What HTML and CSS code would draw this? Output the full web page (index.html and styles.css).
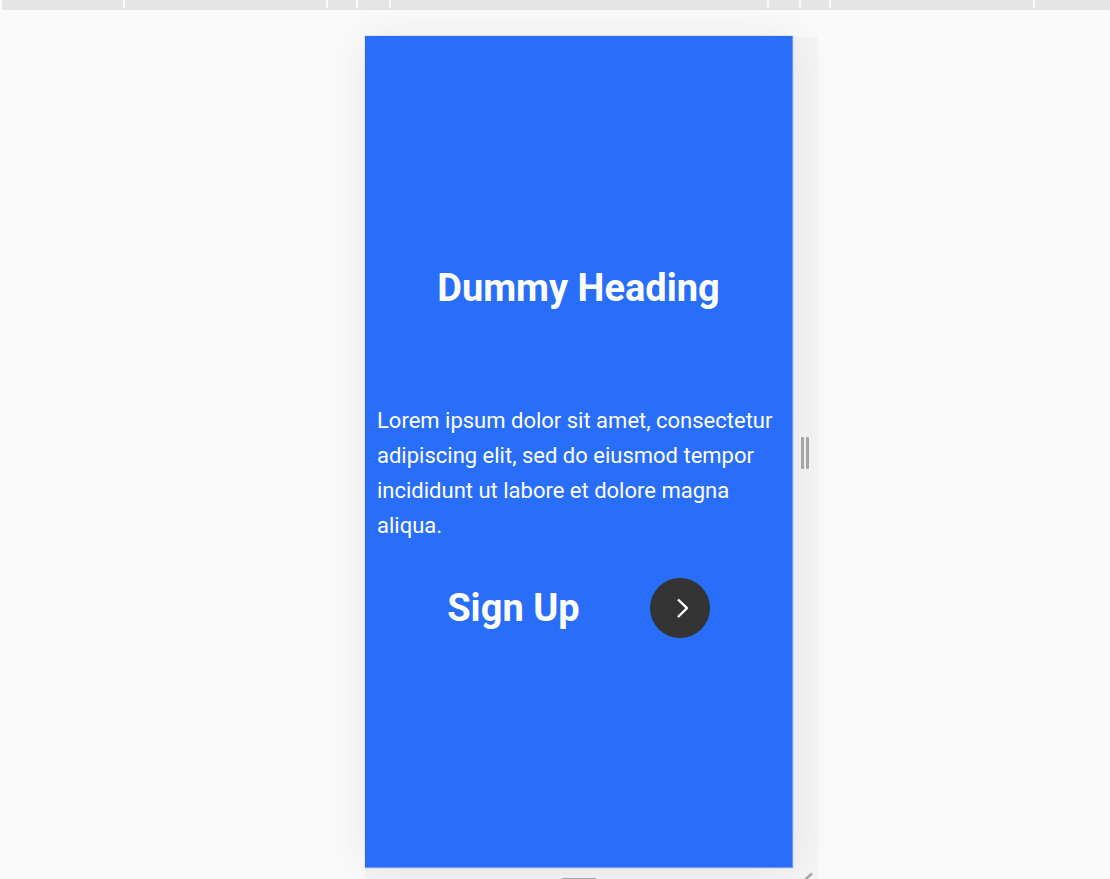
FILE: index.html
```html
<!DOCTYPE html>
<html lang="en">
<head>
<meta charset="utf-8">
<meta name="viewport" content="width=device-width, initial-scale=1">
<title>Sign Up</title>
<link rel="stylesheet" href="styles.css">
</head>
<body>
<div class="ruler">
  <div class="ruler-segments">
    <span></span><span></span><span></span><span></span><span></span><span></span><span></span><span></span><span></span>
  </div>
</div>
<div class="stage">
  <div class="device">
    <main class="screen">
      <h1 class="heading">Dummy Heading</h1>
      <p class="copy">Lorem ipsum dolor sit amet, consectetur adipiscing elit, sed do eiusmod tempor incididunt ut labore et dolore magna aliqua.</p>
      <div class="signup">
        <h2 class="heading">Sign Up</h2>
        <button class="next" type="button" aria-label="Sign Up">
          <svg viewBox="0 0 60 60" aria-hidden="true"><path d="M28 21.500L37 30.200L28 39"/></svg>
        </button>
      </div>
    </main>
    <div class="side-handle"><span></span><span></span></div>
    <div class="bottom-handle"><span></span></div>
    <div class="corner-handle">
      <svg viewBox="0 0 25 11" aria-hidden="true"><path d="M10 13.500L19 5.500"/></svg>
    </div>
  </div>
</div>
</body>
</html>
```
FILE: styles.css
```css
* { box-sizing: border-box; }

body {
  margin: 0;
  height: 100vh;
  min-height: 520px;
  display: flex;
  flex-direction: column;
  overflow: hidden;
  background: #fafafa;
  font-family: Roboto, sans-serif;
}

.ruler {
  flex: none;
  height: 10px;
  margin-left: 2px;
  background: #e5e5e5;
}

.ruler-segments {
  display: grid;
  grid-template-columns: 123fr 203fr 30fr 33fr 378fr 32fr 30fr 204fr 75fr;
  height: 8px;
}

.ruler-segments span { border-right: 2px solid #fafafa; }
.ruler-segments span:last-child { border-right: 0; }

.stage {
  flex: 1;
  display: flex;
  justify-content: center;
  padding: 26px 0 0 73px;
}

.device {
  display: grid;
  grid-template-columns: minmax(0, 428px) 25px;
  grid-template-rows: 1fr 11px;
}

.screen {
  display: flex;
  flex-direction: column;
  justify-content: center;
  padding: 0 12px;
  border-right: 1px solid #6f9cfb;
  border-bottom: 1px solid #6f9cfb;
  background: #286efa;
  color: #fff;
  box-shadow: 0 0 1px #8c8c8c, 0 0 40px rgba(0, 0, 0, 0.07);
}

.heading {
  margin: 0;
  font-size: 38px;
  line-height: 44px;
  font-weight: 700;
  text-align: center;
}

.copy {
  margin: 93px 0 35px;
  font-size: 22px;
  line-height: 35px;
}

.signup {
  display: flex;
  align-items: center;
  justify-content: space-evenly;
}

.next {
  width: 60px;
  height: 60px;
  padding: 0;
  border: 0;
  border-radius: 50%;
  background: #333;
  cursor: pointer;
}

.next svg, .corner-handle svg {
  display: block;
  width: 100%;
  fill: none;
}

.next path {
  stroke: #fff;
  stroke-width: 2.4;
  stroke-linejoin: round;
}

.side-handle, .bottom-handle, .corner-handle { background: rgba(0, 0, 0, 0.024); }

.side-handle {
  display: flex;
  align-items: center;
  justify-content: center;
  gap: 2px;
  margin-top: 1px;
  padding-right: 2px;
}

.side-handle span {
  width: 3px;
  height: 32px;
  border-radius: 1px;
  background: #a5a5a5;
}

.bottom-handle {
  display: flex;
  justify-content: center;
  align-items: flex-end;
}

.bottom-handle span {
  width: 34px;
  height: 1px;
  background: #a5a5a5;
}

.corner-handle path { stroke: #a5a5a5; stroke-width: 2.5; }
```
